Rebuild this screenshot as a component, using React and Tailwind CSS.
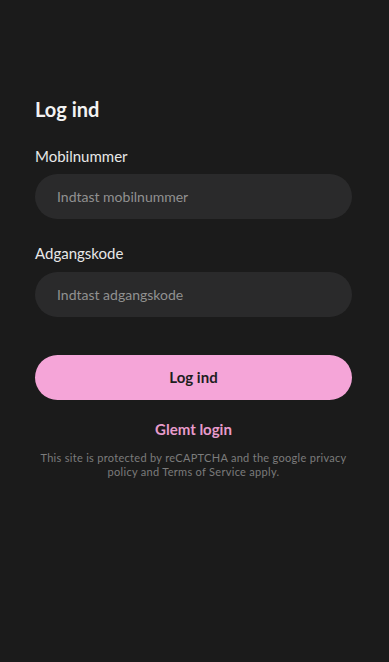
export default function App() {
  return (
    <div className="min-h-[662px] w-full bg-[#1b1b1b] pl-[35px] pr-[37px] pt-[95px]" style={{ fontFamily: "Lato, 'Noto Sans', sans-serif" }}>
      <h1 className="text-[20px] leading-[28px] font-bold text-[#f2f2f2]">Log ind</h1>
      <label className="mt-[23px] block text-[15px] leading-[20px] text-[#e8e8e8]">Mobilnummer</label>
      <div className="mt-[8px] flex h-[45px] items-center rounded-full bg-[#2a2a2b] px-[22px] text-[14px] text-[#919191]">
        Indtast mobilnummer
      </div>
      <label className="mt-[24px] block text-[15px] leading-[20px] text-[#e8e8e8]">Adgangskode</label>
      <div className="mt-[9px] flex h-[45px] items-center rounded-full bg-[#2a2a2b] px-[22px] text-[14px] text-[#919191]">
        Indtast adgangskode
      </div>
      <button className="mt-[38px] flex h-[45px] w-full items-center justify-center rounded-full bg-[#f5a5d8] text-[15px] font-bold text-[#1e1e1e]">
        Log ind
      </button>
      <div className="mt-[19px] text-center text-[15px] leading-[20px] font-bold text-[#e89bcc]">Glemt login</div>
      <p className="mt-[12px] text-center text-[11px] leading-[14px] tracking-[0.3px] text-[#7c7c7c]">
        This site is protected by reCAPTCHA and the google privacy<br />policy and Terms of Service apply.
      </p>
    </div>
  );
}
